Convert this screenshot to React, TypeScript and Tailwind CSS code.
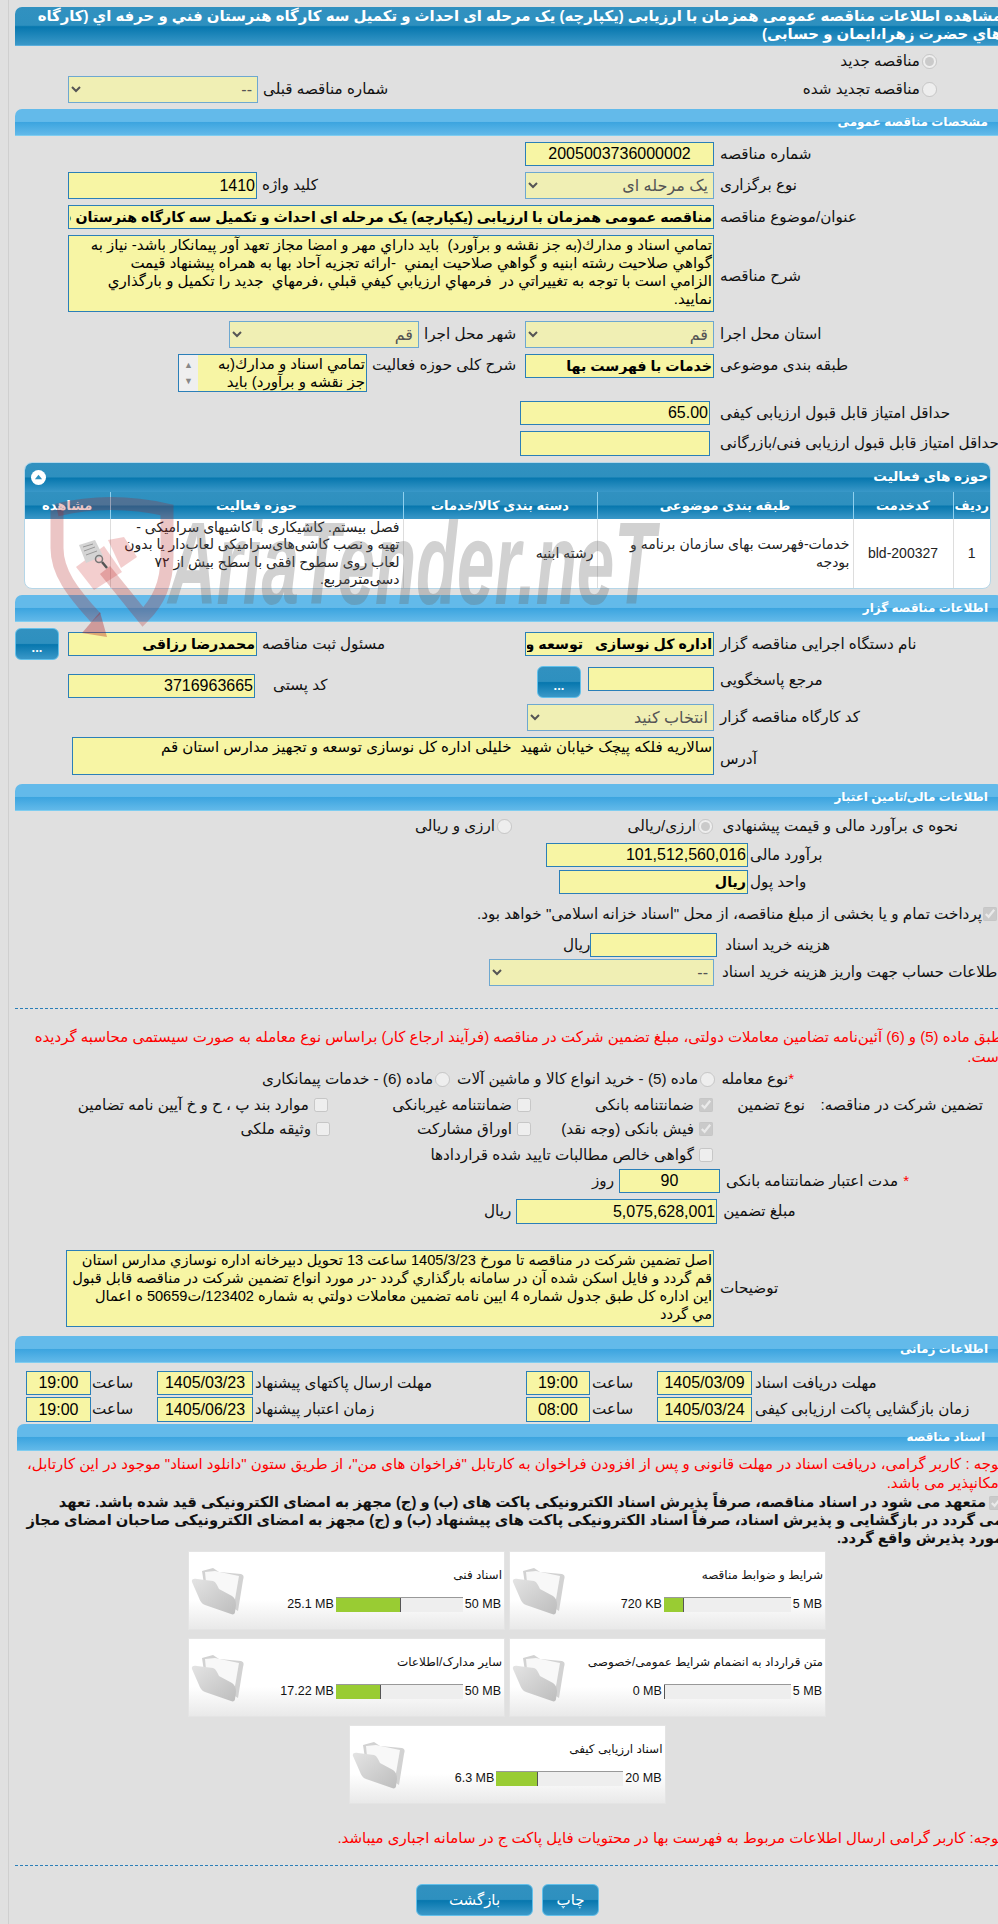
import React from 'react';

const inputBase = 'h-full min-w-0 border border-[#2b7fb8] bg-[#f7f5a4] px-px text-black outline-none';

function Field({ value = '', className = '', bold = false, center = false }: { value?: string; className?: string; bold?: boolean; center?: boolean }) {
  return (
    <input
      readOnly
      dir="rtl"
      value={value}
      className={`${inputBase} ${bold ? 'text-[14.2px] font-bold' : 'text-[16px]'} ${center ? 'text-center' : ''} ${className}`}
    />
  );
}

function Pick({ value, className = '' }: { value: string; className?: string }) {
  return (
    <select
      disabled
      dir="rtl"
      className={`h-full min-w-0 border border-[#6ea8d0] bg-[#f0efb4] px-px text-[16px] text-[#555] outline-none ${className}`}
    >
      <option>{value}</option>
    </select>
  );
}

function Memo({ lines, className = '' }: { lines: string[]; className?: string }) {
  return (
    <div dir="rtl" className={`overflow-hidden border border-[#2b7fb8] bg-[#f7f5a4] px-px leading-[18px] text-black ${className}`}>
      {lines.map((line, i) => (
        <div key={i} className="whitespace-pre">
          {line}
        </div>
      ))}
    </div>
  );
}

function Label({ children, className = '' }: { children: React.ReactNode; className?: string }) {
  return (
    <span dir="rtl" className={`text-[15.2px] whitespace-nowrap text-[#111] ${className}`}>
      {children}
    </span>
  );
}

function Row({ left, right, className = '' }: { left?: React.ReactNode; right?: React.ReactNode; className?: string }) {
  return (
    <div className={`grid grid-cols-[510px_1fr] ${className}`}>
      <div className="flex h-full items-center gap-[5px] pl-[53px]">{left}</div>
      <div className="flex h-full items-center gap-[6px]">{right}</div>
    </div>
  );
}

function Section({ title, className = '' }: { title: string; className?: string }) {
  return (
    <div
      dir="rtl"
      className={`flex h-[27px] items-center rounded-t-[7px] border-b border-[#7fcdf0] bg-[linear-gradient(#63baea_0%,#63baea_48%,#3ba4df_50%,#62b9e9_100%)] pr-[15px] text-[12px] font-bold text-white ${className}`}
    >
      {title}
    </div>
  );
}

function Radio({ checked = false, className = '' }: { checked?: boolean; className?: string }) {
  return <input type="radio" disabled checked={checked} readOnly className={`m-0 h-[15px] w-[15px] shrink-0 ${className}`} />;
}

function Check({ checked = false, className = '' }: { checked?: boolean; className?: string }) {
  return <input type="checkbox" disabled checked={checked} readOnly className={`m-0 h-[14px] w-[14px] shrink-0 ${className}`} />;
}

function Option({ children, checked = false, className = '' }: { children: React.ReactNode; checked?: boolean; className?: string }) {
  return (
    <div className={`flex items-center gap-[5px] ${className}`}>
      <Check checked={checked} />
      <Label>{children}</Label>
    </div>
  );
}

function BlueButton({ children, className = '' }: { children: React.ReactNode; className?: string }) {
  return (
    <button
      type="button"
      dir="rtl"
      className={`shrink-0 rounded-[6px] border border-[#62c0ea] bg-[linear-gradient(#3191c0_0%,#2e90bf_48%,#0777ae_52%,#3a98c8_100%)] text-white ${className}`}
    >
      {children}
    </button>
  );
}

function Folder() {
  return (
    <svg viewBox="0 0 54 48" className="h-[48px] w-[54px] shrink-0">
      <defs>
        <linearGradient id="fold" x1="0" y1="0" x2="1" y2="1">
          <stop offset="0" stopColor="#e4e4e4" />
          <stop offset="1" stopColor="#bdbdbd" />
        </linearGradient>
      </defs>
      <path d="M11 4 L22 1 L28 5 L50 7 C53 8 53 10 52 13 L47 44 L14 24 Z" fill="#d2d2d2" />
      <path d="M14 5 L24 4 L48 9 L43 38 L16 26 Z" fill="#f8f8f8" />
      <path d="M1 15 C0 12 3 11 6 12 L22 14 C25 15 26 18 28 22 L41 29 C44 31 45 34 45 38 L44 45 C44 47 42 48 40 47 L14 38 C11 37 9 34 8 31 Z" fill="url(#fold)" />
    </svg>
  );
}

function DocCard({ title, used, max, fill }: { title: string; used: string; max: string; fill: number }) {
  return (
    <div className="flex h-[79px] w-[317px] border border-[#e4e4e4] bg-[linear-gradient(#ffffff_0%,#ffffff_62%,#e9e9e9_100%)] pl-[2px]">
      <div className="pt-[15px]">
        <Folder />
      </div>
      <div className="flex min-w-0 flex-1 flex-col items-end pr-[2px]">
        <span dir="rtl" className="mt-[14px] text-[12px] leading-[18px] whitespace-nowrap text-[#111]">
          {title}
        </span>
        <div className="mt-[13px] flex h-[15px] items-center pr-px text-[12.5px] whitespace-nowrap text-[#111]">
          <span className="pr-[2px]">{used}</span>
          <div className="h-[15px] w-[127px] border-t border-[#999] bg-[#eeeeee]">
            <div className="h-full border-r border-[#555] bg-[#99cc33]" style={{ width: fill }} />
          </div>
          <span className="pl-[2px]">{max}</span>
        </div>
      </div>
    </div>
  );
}

function Watermark() {
  return (
    <>
      <svg viewBox="0 490 200 160" className="pointer-events-none absolute top-[490px] left-0 h-[160px] w-[200px]">
        <path
          d="M57 510 Q110 497 167 510 L167 556 C167 584 158 602 143 617 L105 570"
          fill="none"
          stroke="#b01818"
          strokeOpacity="0.25"
          strokeWidth="13"
        />
        <path d="M57 510 L57 548 C57 572 72 592 96 618" fill="none" stroke="#b01818" strokeOpacity="0.25" strokeWidth="13" />
        <path d="M100 612 L107 637 L82 633 Z" fill="#b01818" fillOpacity="0.35" />
        <path d="M76 567 L104 546 L122 572 L94 590 Z" fill="#c81e1e" fillOpacity="0.22" />
        <path d="M108 540 L124 537 L137 557 L121 568 Z" fill="#c81e1e" fillOpacity="0.22" />
        <path d="M79 545 L95 540 L103 556 L86 563 Z" fill="#d4d4d4" />
        <path d="M83 547 L93 544 M84 551 L95 547 M86 555 L97 551" stroke="#999" strokeWidth="1" />
        <circle cx="99" cy="559" r="3.5" fill="none" stroke="#777" strokeWidth="1.5" />
        <path d="M102 562 L107 568" stroke="#555" strokeWidth="2.5" />
      </svg>
      <span className="pointer-events-none absolute top-[494px] left-[168px] origin-left scale-x-[0.58] text-[116px] leading-[140px] font-bold whitespace-nowrap text-[#666]/30 italic">
        AriaTender.neT
      </span>
    </>
  );
}

export default function App() {
  return (
    <div className="relative h-[1924px] w-[998px] overflow-hidden bg-[#e0e0e0] font-['Liberation_Sans','DejaVu_Sans',sans-serif]">
      <div className="ml-[8px] h-full w-[1000px] border-l border-[#cfcfcf] pl-[6px]">
        <div className="w-[988px] pt-[7px]">
          {/* Page title */}
          <div
            dir="rtl"
            className="h-[39px] rounded-t-[7px] border-b border-[#5aaedb] bg-[linear-gradient(#3191c0_0%,#2e90bf_48%,#0777ae_52%,#3a98c8_100%)] pr-px text-[14.9px] leading-[18px] font-bold whitespace-nowrap text-white"
          >
            <div>مشاهده اطلاعات مناقصه عمومی همزمان با ارزیابی (یکپارچه) یک مرحله ای احداث و تکمیل سه کارگاه هنرستان فني و حرفه اي (کارگاه</div>
            <div>هاي حضرت زهرا،ایمان و حسابی)</div>
          </div>

          <div dir="rtl" className="mt-[5px] flex h-[20px] items-center gap-[2px] pr-[66px]">
            <Radio checked />
            <Label>مناقصه جدید</Label>
          </div>
          <Row
            className="mt-[5px] h-[27px]"
            left={
              <>
                <Pick value="--" className="w-[190px]" />
                <Label>شماره مناقصه قبلی</Label>
              </>
            }
            right={
              <div dir="rtl" className="flex w-full items-center gap-[2px] pr-[66px]">
                <Radio />
                <Label>مناقصه تجدید شده</Label>
              </div>
            }
          />

          <Section title="مشخصات مناقصه عمومی" className="mt-[6px]" />
          <Row
            className="mt-[6px] h-[24px]"
            right={
              <>
                <Field value="2005003736000002" center className="w-[189px]" />
                <Label>شماره مناقصه</Label>
              </>
            }
          />
          <Row
            className="mt-[6px] h-[27px]"
            left={
              <>
                <Field value="1410" className="h-[25px] w-[189px]" />
                <Label>کلید واژه</Label>
              </>
            }
            right={
              <>
                <Pick value="یک مرحله ای" className="w-[189px]" />
                <Label>نوع برگزاری</Label>
              </>
            }
          />
          <div className="mt-[6px] flex h-[24px] items-center gap-[6px] pl-[53px]">
            <Field
              bold
              value="مناقصه عمومی همزمان با ارزیابی (یکپارچه) یک مرحله ای احداث و تکمیل سه کارگاه هنرستان فني و حرفه اي (کارگاه هاي حضرت زهرا،ایمان و حسابی)"
              className="w-[646px]"
            />
            <Label>عنوان/موضوع مناقصه</Label>
          </div>
          <div className="mt-[6px] flex h-[77px] items-center gap-[6px] pl-[53px]">
            <Memo
              className="h-full w-[646px] text-[15px]"
              lines={[
                'تمامي اسناد و مدارك(به جز نقشه و برآورد)  بايد داراي مهر و امضا مجاز تعهد آور پیمانکار باشد- نیاز به',
                'گواهي صلاحيت رشته ابنيه و گواهي صلاحيت ايمني  -ارائه تجزيه آحاد بها به همراه پیشنهاد قیمت',
                'الزامي است با توجه به تغییراتي در  فرمهاي ارزيابي کيفي قبلي ،فرمهاي  جديد را تكميل و بارگذاري',
                'نماييد.',
              ]}
            />
            <Label className="mt-[6px]">شرح مناقصه</Label>
          </div>
          <div className="mt-[9px] flex h-[27px] items-center pl-[214px]">
            <Pick value="قم" className="w-[190px]" />
            <Label className="ml-[5px] w-[101px] text-left">شهر محل اجرا</Label>
            <Pick value="قم" className="w-[189px]" />
            <Label className="ml-[6px]">استان محل اجرا</Label>
          </div>
          <div className="mt-[6px] flex h-[38px] items-start pl-[163px]">
            <div dir="rtl" className="flex h-full w-[189px] border border-[#2b7fb8] bg-[#f7f5a4] text-[15px] leading-[18px] text-black">
              <div className="min-w-0 flex-1 overflow-hidden pr-px">تمامي اسناد و مدارك(به جز نقشه و برآورد)  بايد</div>
              <div className="flex w-[19px] shrink-0 flex-col items-center justify-between bg-[#efefef] py-[3px] text-[9px] leading-[14px] text-[#888]">
                <span>▲</span>
                <span>▼</span>
              </div>
            </div>
            <Label className="ml-[5px] w-[153px] text-left">شرح کلی حوزه فعالیت</Label>
            <Field bold value="خدمات با فهرست بها" className="h-[24px]! w-[189px]" />
            <Label className="ml-[6px]">طبقه بندی موضوعی</Label>
          </div>
          <div className="mt-[9px] flex h-[24px] items-center gap-[10px] pl-[505px]">
            <Field value="65.00" className="w-[190px]" />
            <Label>حداقل امتیاز قابل قبول ارزیابی کیفی</Label>
          </div>
          <div className="mt-[6px] flex h-[25px] items-center gap-[10px] pl-[505px]">
            <Field className="w-[190px]" />
            <Label>حداقل امتیاز قابل قبول ارزیابی فنی/بازرگانی</Label>
          </div>

          {/* Activity table */}
          <div className="mt-[6px] ml-[9px] w-[967px] overflow-hidden rounded-[8px] border border-[#b5d6e8] bg-white">
            <div
              dir="rtl"
              className="flex h-[29px] items-center justify-between bg-[linear-gradient(#3191c0_0%,#2e90bf_48%,#0777ae_52%,#3a98c8_100%)] pr-[2px] pl-[6px] text-[13.5px] font-bold text-white"
            >
              <span>حوزه های فعالیت</span>
              <span className="flex h-[15px] w-[15px] items-center justify-center rounded-full bg-white">
                <svg viewBox="0 0 10 10" className="h-[9px] w-[9px]">
                  <path d="M5 2 L9 7 L1 7 Z" fill="#2e90bf" />
                </svg>
              </span>
            </div>
            <table dir="rtl" className="w-full table-fixed border-collapse">
              <thead>
                <tr className="h-[27px] bg-[linear-gradient(#3191c0_0%,#2e90bf_48%,#0777ae_52%,#3a98c8_100%)] text-[13px] font-bold text-white">
                  <th className="w-[37px] border-l border-[#8fd0ee] font-bold">ردیف</th>
                  <th className="w-[100px] border-l border-[#8fd0ee] font-bold">کدخدمت</th>
                  <th className="w-[256px] border-l border-[#8fd0ee] font-bold">طبقه بندی موضوعی</th>
                  <th className="w-[194px] border-l border-[#8fd0ee] font-bold">دسته بندی کالا/خدمات</th>
                  <th className="w-[293px] border-l border-[#8fd0ee] font-bold">حوزه فعالیت</th>
                  <th className="font-bold">مشاهده</th>
                </tr>
              </thead>
              <tbody>
                <tr className="h-[69px] text-[14px] leading-[17.3px] text-[#222]">
                  <td className="border-l border-[#dddddd] text-center">1</td>
                  <td className="border-l border-[#dddddd] text-center">bld-200327</td>
                  <td className="border-l border-[#dddddd] px-[3px]">خدمات-فهرست بهای سازمان برنامه و بودجه</td>
                  <td className="border-l border-[#dddddd] px-[3px]">رشته ابنیه</td>
                  <td className="border-l border-[#dddddd] px-[3px]">
                    فصل بیستم. کاشیکاری با کاشیهای سرامیکی - تهیه و نصب کاشی‌های‌سرامیکی لعاب‌دار یا بدون لعاب روی سطوح افقی با سطح بیش از ۷۲ دسی‌مترمربع.
                  </td>
                  <td />
                </tr>
              </tbody>
            </table>
          </div>

          <Section title="اطلاعات مناقصه گزار" className="mt-[6px]" />
          <div className="mt-[6px] grid h-[32px] grid-cols-[510px_1fr]">
            <div className="flex h-full items-center">
              <BlueButton className="h-full w-[44px] pt-[8px] text-[13px] font-bold">...</BlueButton>
              <Field bold value="محمدرضا رزاقی" className="ml-[9px] h-[24px]! w-[189px]" />
              <Label className="ml-[5px]">مسئول ثبت مناقصه</Label>
            </div>
            <div className="flex h-full items-center gap-[6px]">
              <Field bold value="اداره کل نوسازی   توسعه و تجهیز مدارس استان قم" className="h-[24px]! w-[189px]" />
              <Label>نام دستگاه اجرایی مناقصه گزار</Label>
            </div>
          </div>
          <div className="mt-[6px] grid h-[32px] grid-cols-[510px_1fr]">
            <div className="flex h-full items-center gap-[18px] pl-[53px]">
              <Field value="3716963665" className="mt-[7px] h-[24px]! w-[187px]" />
              <Label className="mt-[7px]">کد پستی</Label>
            </div>
            <div className="flex h-full items-start pl-[12px]">
              <BlueButton className="h-full w-[44px] pt-[8px] text-[13px] font-bold">...</BlueButton>
              <Field className="mt-px ml-[7px] h-[24px]! w-[126px]" />
              <Label className="mt-[3px] ml-[6px]">مرجع پاسخگویی</Label>
            </div>
          </div>
          <div className="mt-[6px] flex h-[27px] items-center pl-[512px]">
            <Pick value="انتخاب کنید" className="w-[187px]" />
            <Label className="ml-[6px]">کد کارگاه مناقصه گزار</Label>
          </div>
          <div className="mt-[6px] flex h-[38px] items-center gap-[6px] pl-[57px]">
            <Memo className="h-full w-[642px] text-[15px]" lines={['سالاریه فلکه پیچک خیابان شهید  خلیلی اداره کل نوسازی توسعه و تجهیز مدارس استان قم']} />
            <Label className="mt-[6px]">آدرس</Label>
          </div>

          <Section title="اطلاعات مالی/تامین اعتبار" className="mt-[9px]" />
          <div dir="rtl" className="mt-[5px] flex h-[20px] items-center pr-[45px]">
            <Label className="w-[245px]">نحوه ی برآورد مالی و قیمت پیشنهادی</Label>
            <div className="flex w-[201px] items-center gap-[2px]">
              <Radio checked />
              <Label>ارزی/ریالی</Label>
            </div>
            <div className="flex items-center gap-[2px]">
              <Radio />
              <Label>ارزی و ریالی</Label>
            </div>
          </div>
          <div className="mt-[7px] flex h-[24px] items-center gap-[2px] pl-[531px]">
            <Field value="101,512,560,016" className="w-[202px]" />
            <Label>برآورد مالی</Label>
          </div>
          <div className="mt-[3px] flex h-[24px] items-center gap-[2px] pl-[544px]">
            <Field bold value="ریال" className="w-[189px]" />
            <Label>واحد پول</Label>
          </div>
          <div dir="rtl" className="mt-[10px] flex h-[20px] items-center gap-[1px] pr-[6px]">
            <Check checked />
            <Label>پرداخت تمام و یا بخشی از مبلغ مناقصه، از محل "اسناد خزانه اسلامی" خواهد بود.</Label>
          </div>
          <div className="mt-[9px] flex h-[24px] items-center pl-[548px]">
            <Label>ریال</Label>
            <Field className="w-[127px]" />
            <Label className="ml-[8px]">هزینه خرید اسناد</Label>
          </div>
          <div className="mt-[2px] flex h-[27px] items-center pl-[474px]">
            <Pick value="--" className="w-[225px]" />
            <Label className="ml-[8px]">اطلاعات حساب جهت واریز هزینه خرید اسناد</Label>
          </div>

          <div className="mt-[22px] border-t border-dashed border-[#2b7fb8]" />
          <div dir="rtl" className="mt-[18px] pl-[9px] text-[15px] leading-[20px] text-[#f00]">
            طبق ماده (5) و (6) آئین‌نامه تضامین معاملات دولتی، مبلغ تضمین شرکت در مناقصه (فرآیند ارجاع کار) براساس نوع معامله به صورت سیستمی محاسبه گردیده است.
          </div>

          <div dir="rtl" className="mt-[2px] flex h-[20px] items-center pr-[209px]">
            <span className="text-[15px] text-[#f00]">*</span>
            <Label className="w-[73px]">نوع معامله</Label>
            <div className="flex w-[265px] items-center gap-[2px]">
              <Radio />
              <Label>ماده (5) - خرید انواع کالا و ماشین آلات</Label>
            </div>
            <div className="flex items-center gap-[2px]">
              <Radio />
              <Label>ماده (6) - خدمات پیمانکاری</Label>
            </div>
          </div>
          <div dir="rtl" className="mt-[6px] flex h-[20px] items-center pr-[20px]">
            <Label className="w-[178px]">تضمین شرکت در مناقصه:</Label>
            <Label className="w-[92px]">نوع تضمین</Label>
            <Option checked className="w-[182px]">ضمانتنامه بانکی</Option>
            <Option className="w-[203px]">ضمانتنامه غیربانکی</Option>
            <Option>موارد بند پ ، ح و خ آیین نامه تضامین</Option>
          </div>
          <div dir="rtl" className="mt-[4px] flex h-[20px] items-center pr-[290px]">
            <Option checked className="w-[182px]">فیش بانکی (وجه نقد)</Option>
            <Option className="w-[201px]">اوراق مشارکت</Option>
            <Option>وثیقه ملکی</Option>
          </div>
          <div dir="rtl" className="mt-[6px] flex h-[20px] items-center pr-[290px]">
            <Option>گواهی خالص مطالبات تایید شده قراردادها</Option>
          </div>
          <div className="mt-[4px] flex h-[24px] items-center pl-[577px]">
            <Label>روز</Label>
            <Field center value="90" className="ml-[5px] w-[101px]" />
            <Label className="ml-[6px]">مدت اعتبار ضمانتنامه بانکی</Label>
            <span className="ml-[5px] text-[15px] text-[#f00]">*</span>
          </div>
          <div className="mt-[6px] flex h-[25px] items-center pl-[469px]">
            <Label>ریال</Label>
            <Field value="5,075,628,001" className="ml-[5px] w-[201px]" />
            <Label className="ml-[6px]">مبلغ تضمین</Label>
          </div>
          <div className="mt-[26px] flex h-[77px] items-center gap-[6px] pl-[51px]">
            <Memo
              className="h-full w-[648px] text-[14.6px]"
              lines={[
                'اصل تضمين شرکت در مناقصه تا مورخ 1405/3/23 ساعت 13 تحويل دبيرخانه اداره نوسازي مدارس استان',
                'قم گردد و فايل اسکن شده آن در سامانه بارگذاري گردد -در مورد انواع تضمين شرکت در مناقصه قابل قبول',
                'اين اداره کل طبق جدول شماره 4 ايين نامه تضمين معاملات دولتي به شماره 123402/ت50659 ه اعمال',
                'مي گردد',
              ]}
            />
            <Label>توضیحات</Label>
          </div>

          <Section title="اطلاعات زمانی" className="mt-[9px]" />
          <div className="mt-[8px] flex h-[24px] items-center pl-[11px]">
            <Field center value="19:00" className="w-[65px]" />
            <Label className="ml-[1px] w-[65px] text-left">ساعت</Label>
            <Field center value="1405/03/23" className="w-[96px]" />
            <Label className="ml-[2px] w-[271px] text-left">مهلت ارسال پاکتهای پیشنهاد</Label>
            <Field center value="19:00" className="w-[64px]" />
            <Label className="ml-[2px] w-[65px] text-left">ساعت</Label>
            <Field center value="1405/03/09" className="w-[95px]" />
            <Label className="ml-[3px]">مهلت دریافت اسناد</Label>
          </div>
          <div className="mt-[2px] flex h-[25px] items-center pl-[11px]">
            <Field center value="19:00" className="w-[65px]" />
            <Label className="ml-[1px] w-[65px] text-left">ساعت</Label>
            <Field center value="1405/06/23" className="w-[96px]" />
            <Label className="ml-[2px] w-[271px] text-left">زمان اعتبار پیشنهاد</Label>
            <Field center value="08:00" className="w-[64px]" />
            <Label className="ml-[2px] w-[65px] text-left">ساعت</Label>
            <Field center value="1405/03/24" className="w-[95px]" />
            <Label className="ml-[3px]">زمان بازگشایی پاکت ارزیابی کیفی</Label>
          </div>

          <Section title="اسناد مناقصه" className="mt-[2px] ml-[2px] pr-[18px]" />
          <div dir="rtl" className="mt-[3px] pl-[10px] text-[15px] leading-[19px] text-[#f00]">
            توجه : کاربر گرامی، دریافت اسناد در مهلت قانونی و پس از افزودن فراخوان به کارتابل "فراخوان های من"، از طریق ستون "دانلود اسناد" موجود در این کارتابل، امکانپذیر می باشد.
          </div>
          <div dir="rtl" className="mt-px text-[14.7px] leading-[18px] font-bold whitespace-nowrap text-[#111]">
            <div>
              <Check checked className="ml-[3px] inline-block align-middle" />
              متعهد می شود در اسناد مناقصه، صرفاً پذیرش اسناد الکترونیکی پاکت های (ب) و (ج) مجهز به امضای الکترونیکی قید شده باشد. تعهد
            </div>
            <div>می گردد در بازگشایی و پذیرش اسناد، صرفاً اسناد الکترونیکی پاکت های پیشنهاد (ب) و (ج) مجهز به امضای الکترونیکی صاحبان امضای مجاز</div>
            <div>مورد پذیرش واقع گردد.</div>
          </div>

          <div className="mt-[4px] ml-[172px] flex w-[640px] flex-wrap justify-center gap-x-[4px] gap-y-[8px]">
            <DocCard title="اسناد فنی" used="25.1 MB" max="50 MB" fill={65} />
            <DocCard title="شرایط و ضوابط مناقصه" used="720 KB" max="5 MB" fill={20} />
            <DocCard title="سایر مدارک/اطلاعات" used="17.22 MB" max="50 MB" fill={45} />
            <DocCard title="متن قرارداد به انضمام شرایط عمومی/خصوصی" used="0 MB" max="5 MB" fill={1} />
            <DocCard title="اسناد ارزیابی کیفی" used="6.3 MB" max="20 MB" fill={42} />
          </div>

          <div dir="rtl" className="mt-[24px] text-[15px] leading-[20px] whitespace-nowrap text-[#f00]">
            توجه: کاربر گرامی ارسال اطلاعات مربوط به فهرست بها در محتویات فایل پاکت ج در سامانه اجباری میباشد.
          </div>
          <div className="mt-[17px] border-t border-dashed border-[#2b7fb8]" />
          <div className="mt-[18px] flex h-[32px] gap-[9px] pl-[401px]">
            <BlueButton className="h-full w-[117px] text-[15px]">بازگشت</BlueButton>
            <BlueButton className="h-full w-[57px] text-[15px]">چاپ</BlueButton>
          </div>
        </div>
      </div>
      <Watermark />
    </div>
  );
}
